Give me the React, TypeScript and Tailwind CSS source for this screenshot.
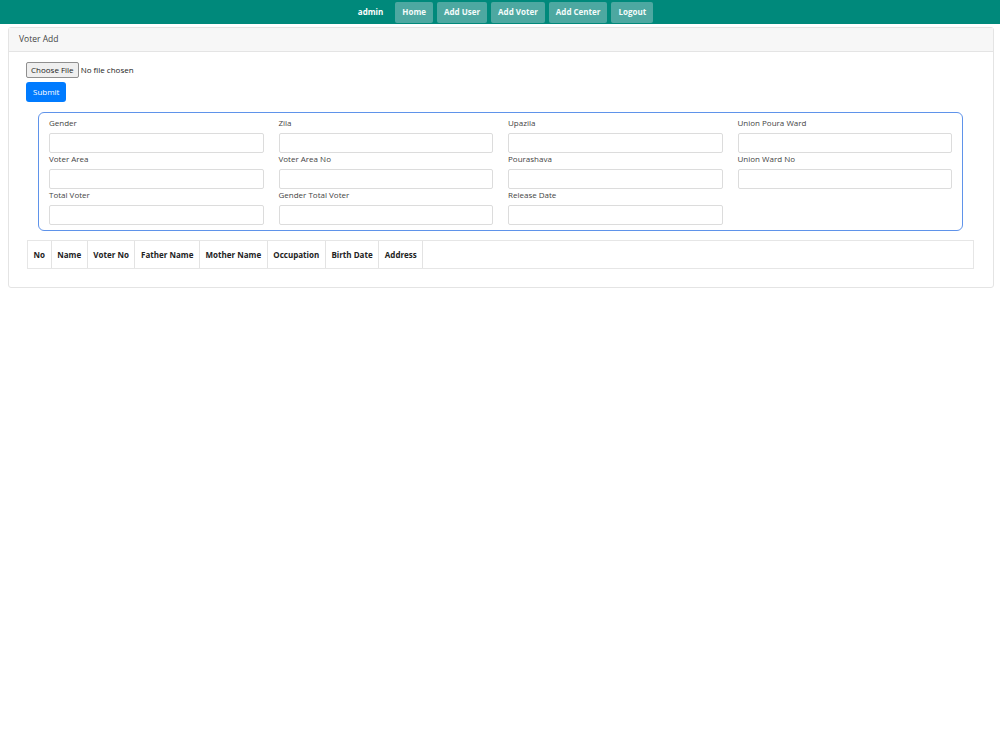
const navItems = ['Home', 'Add User', 'Add Voter', 'Add Center', 'Logout'];

const fieldRows: (string | null)[][] = [
  ['Gender', 'Zila', 'Upazila', 'Union Poura Ward'],
  ['Voter Area', 'Voter Area No', 'Pourashava', 'Union Ward No'],
  ['Total Voter', 'Gender Total Voter', 'Release Date', null],
];

const columns = [
  'No',
  'Name',
  'Voter No',
  'Father Name',
  'Mother Name',
  'Occupation',
  'Birth Date',
  'Address',
];

function Navbar() {
  return (
    <nav className="flex h-[24px] items-center justify-center bg-[#00897b] pl-[11px] text-[8px] font-bold text-white">
      <span className="mr-[12px]">admin</span>
      <div className="flex gap-[4px]">
        {navItems.map((item) => (
          <span
            key={item}
            className="flex h-[21px] items-center rounded-[2px] bg-[#4da8a1] px-[7px] text-[#f4fbfa]"
          >
            {item}
          </span>
        ))}
      </div>
    </nav>
  );
}

function FieldGrid() {
  return (
    <div className="mx-[12px] mt-[10px] rounded-[6px] border border-[#5f93ea] px-[10px] pb-[5px] pt-[4px]">
      {fieldRows.map((row, rowIndex) => (
        <div key={rowIndex} className="grid grid-cols-4 gap-x-[15px]">
          {row.map((label, colIndex) =>
            label ? (
              <div key={label} className="flex flex-col">
                <label className="mb-[4px] h-[12px] text-[8px] leading-[12px] text-[#444]">{label}</label>
                <div className="h-[20px] rounded-[2px] border border-[#dcdcdc] bg-white" />
              </div>
            ) : (
              <div key={colIndex} />
            ),
          )}
        </div>
      ))}
    </div>
  );
}

function VoterTable() {
  return (
    <div className="mx-[1px] mt-[9px] border border-[#e6e6e6]">
      <table className="border-collapse text-[8px] font-bold text-[#222]">
        <thead>
          <tr className="h-[27px]">
            {columns.map((col) => (
              <th key={col} className="border-r border-[#e3e3e3] px-[5.6px] text-left font-bold">
                {col}
              </th>
            ))}
          </tr>
        </thead>
      </table>
    </div>
  );
}

export default function App() {
  return (
    <div className="min-h-[750px] bg-white font-['Open_Sans',sans-serif] text-[#333]">
      <Navbar />
      <div className="mx-[8px] mt-[3px] w-[986px] rounded-[3px] border border-[#e4e4e4]">
        <div className="flex h-[24px] items-center border-b border-[#e4e4e4] bg-[#f7f7f7] px-[10px] text-[8.5px] text-[#444]">
          Voter Add
        </div>
        <div className="pb-[18px] pl-[17px] pr-[18px] pt-[10px]">
          <div className="flex items-center text-[8px] text-[#222]">
            <span className="flex h-[16px] items-center rounded-[2px] border border-[#8f8f8f] bg-[#efefef] px-[4px]">
              Choose File
            </span>
            <span className="ml-[2px]">No file chosen</span>
          </div>
          <button className="mt-[4px] flex h-[20px] items-center rounded-[3px] bg-[#007bff] px-[7px] text-[8px] text-white">
            Submit
          </button>
          <FieldGrid />
          <VoterTable />
        </div>
      </div>
    </div>
  );
}
